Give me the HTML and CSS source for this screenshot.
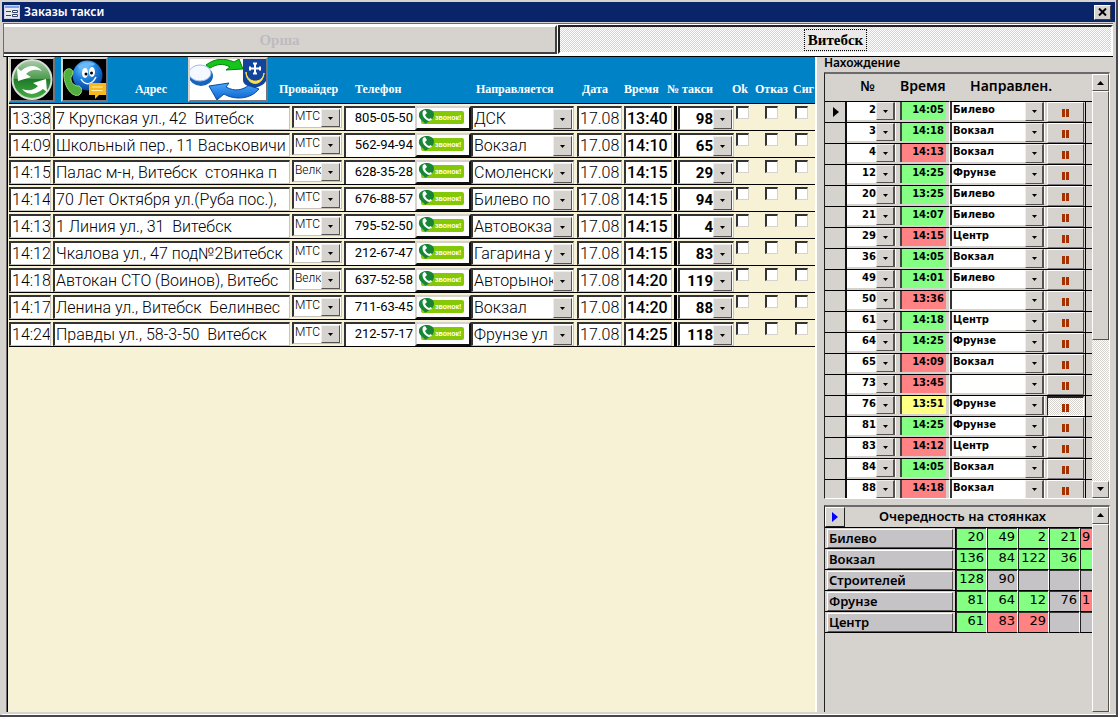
FILE: index.html
```html
<!DOCTYPE html>
<html lang="ru">
<head>
<meta charset="utf-8">
<title>Заказы такси</title>
<link rel="stylesheet" href="styles.css">
</head>
<body>
<div class="window">
  <header class="titlebar">
    <svg class="app-icon" width="16" height="14" viewBox="0 0 16 14" aria-hidden="true">
      <rect width="16" height="14" fill="#c9d2e6"/><rect x="1" y="1" width="14" height="2" fill="#7ba3e8"/>
      <rect x="1" y="3" width="14" height="10" fill="#e9e8ea"/>
      <path d="M2 6.500h5M2 10.500h5" stroke="#35466e"/><path d="M8.500 5.500h5v2h-5zM8.500 9.500h5v2h-5z" fill="#fff" stroke="#35466e"/>
    </svg>
    <h1 class="title">Заказы такси</h1>
    <button class="close" type="button" aria-label="Закрыть"><svg width="9" height="8" viewBox="0 0 9 8"><path d="M1 0.500l7 7M8 0.500l-7 7" stroke="#000" stroke-width="2"/></svg></button>
  </header>
  <nav class="tabs">
    <button class="tab tab-off" type="button"><span class="tab-text">Орша</span></button>
    <button class="tab tab-on" type="button"><span class="tab-text">Витебск</span></button>
  </nav>
  <main class="content">
    <section class="orders">
      <table class="order-table">
        <colgroup>
          <col class="w44"><col><col class="w52"><col class="w71"><col class="w56"><col class="w106"><col class="w47"><col class="w50"><col class="w62"><col class="w29"><col class="w30"><col class="w20">
        </colgroup>
        <thead>
          <tr>
            <th colspan="2" class="tools-cell">
              <div class="tools">
                <button class="tool" type="button" aria-label="Обновить">
                  <svg width="42" height="41" viewBox="0 0 42 41">
                    <defs><linearGradient id="gr" x1="0" y1="0" x2="0" y2="1"><stop offset="0" stop-color="#a9cda6"/><stop offset=".48" stop-color="#4d9a50"/><stop offset=".5" stop-color="#1d7a28"/><stop offset="1" stop-color="#48b044"/></linearGradient></defs>
                    <rect width="42" height="41" fill="#000"/><circle cx="21" cy="20.500" r="19.500" fill="url(#gr)" stroke="#d9ddd9" stroke-width="2"/>
                    <path d="M6 9l1 13 13-4-5-3c5-5 10-5 16-3C25 5 17 6 10 12z" fill="#fff"/>
                    <path d="M36 33l-1-13-13 4 5 3c-5 5-10 5-16 3 6 7 14 6 21 0z" fill="#fff"/>
                  </svg>
                </button>
                <button class="tool" type="button" aria-label="Связь">
                  <svg width="43" height="41" viewBox="0 0 43 41">
                    <defs><radialGradient id="bl" cx=".4" cy=".25" r=".8"><stop offset="0" stop-color="#8ccfff"/><stop offset=".45" stop-color="#1e84e0"/><stop offset="1" stop-color="#053a94"/></radialGradient></defs>
                    <rect width="43" height="41" fill="#000"/><circle cx="24.500" cy="16.500" r="15" fill="url(#bl)"/>
                    <path d="M15 7c5-4 13-5 17-2-3 3-6 1-9 4s-7 2-8-2z" fill="#6cb9f5"/>
                    <ellipse cx="22" cy="14" rx="3" ry="5" fill="#fff"/><ellipse cx="29" cy="13" rx="3" ry="5" fill="#fff"/><circle cx="23" cy="15" r="1.500"/><circle cx="28.500" cy="14" r="1.500"/>
                    <path d="M18 20c4 7 11 6 15-2" fill="none" stroke="#fff" stroke-width="1.500"/>
                    <path d="M1 14c1-5 8-6 9-1 0 4-3 4-2 8 1 4 4 6 8 6 4 2 3 7 0 9C8 39 0 25 1 14z" fill="#4fae3c" stroke="#9adb85"/>
                    <path d="M26 24h17v12h-7l-4 4v-4h-6z" fill="#f7b91d"/><path d="M28.500 28h11M28.500 31.500h11" stroke="#fff1a8"/>
                  </svg>
                </button>
                <span class="address-label">Адрес</span>
                <button class="tool" type="button" aria-label="Сменить город">
                  <svg width="76" height="41" viewBox="0 0 76 41">
                    <defs><linearGradient id="ar" x1="0" y1="0" x2="0" y2="1"><stop offset="0" stop-color="#4aa8ff"/><stop offset="1" stop-color="#0b62c8"/></linearGradient></defs>
                    <rect width="76" height="41" fill="#fff"/>
                    <ellipse cx="11" cy="17" rx="12" ry="10" fill="#1763bd"/><ellipse cx="10" cy="14" rx="11" ry="8" fill="#f4f8ff" stroke="#9bbde8"/>
                    <path d="M16 6C25-1 35-1 44 3l5-3 4 10-17 1 4-3c-7-4-13-3-20 1z" fill="#15c51c" stroke="#08820d"/>
                    <path d="M19 27l20-3-3 4c9 5 17 3 23-2l10 4c-9 11-25 11-35 5l-7 6z" fill="url(#ar)" stroke="#0a4aa0"/>
                    <path d="M53 0h23v22c-2 4-6 5-11 7-7-2-12-3-12-8z" fill="#12449b"/>
                    <path d="M65 4v11M59.500 9.500h11M63 4.500h4M63 14.500h4M60 7.500v4M70 7.500v4" stroke="#fff" stroke-width="2"/>
                    <path d="M56 13c1 12 17 12 18 1-1 15-18 13-18-1z" fill="#ffe14a" stroke="#ffe14a"/>
                  </svg>
                </button>
              </div>
            </th>
            <th class="provider-head">Провайдер</th><th>Телефон</th><th></th><th class="dest-head">Направляется</th><th class="date-head">Дата</th><th>Время</th><th class="taxi-head">№ такси</th><th class="ok-head">Ok</th><th class="refuse-head">Отказ</th><th class="signal-head">Сиг</th>
          </tr>
        </thead>
        <tbody id="orders"></tbody>
      </table>
    </section>
    <aside class="side">
      <h2 class="side-title">Нахождение</h2>
      <section class="subform places">
        <div class="sub-main">
          <table class="place-table">
            <colgroup><col class="w22"><col class="w53"><col class="w50"><col><col class="w38"><col class="w7"></colgroup>
            <thead><tr><th></th><th class="num-head">№</th><th class="time-head">Время</th><th class="where-head">Направлен.</th><th></th><th></th></tr></thead>
            <tbody id="places"></tbody>
          </table>
        </div>
        <div class="scrollbar">
          <button class="arrow" type="button" aria-label="Вверх"><svg width="7" height="4" viewBox="0 0 7 4"><path d="M3.500 0L7 4H0z"/></svg></button>
          <div class="thumb thumb-part"></div>
          <div class="track"></div>
          <button class="arrow" type="button" aria-label="Вниз"><svg width="7" height="4" viewBox="0 0 7 4"><path d="M3.500 4L7 0H0z"/></svg></button>
        </div>
      </section>
      <section class="subform queue">
        <div class="sub-main">
          <div class="queue-head">
            <button class="marker" type="button" aria-label="Текущая запись"><svg width="6" height="10" viewBox="0 0 6 10"><path d="M0 0l6 5-6 5z" fill="#00f"/></svg></button>
            <h2 class="queue-title">Очередность на стоянках</h2>
          </div>
          <table class="queue-table"><tbody id="queue"></tbody></table>
        </div>
        <div class="scrollbar">
          <button class="arrow" type="button" aria-label="Вверх"><svg width="7" height="4" viewBox="0 0 7 4"><path d="M3.500 0L7 4H0z"/></svg></button>
          <div class="thumb thumb-full"></div>
        </div>
      </section>
    </aside>
  </main>
</div>
<script src="app.js"></script>
</body>
</html>
```
FILE: styles.css
```css
* { box-sizing: border-box; }
body { margin: 0; font-family: "Liberation Sans", sans-serif; color: #000; }
button, input, select { font: inherit; color: inherit; margin: 0; padding: 0; border: 0; border-radius: 0; outline: 0; }
button { background: #d6d3ce; cursor: pointer; }
svg { display: block; }
h1, h2 { margin: 0; }

.window { height: 100vh; display: flex; flex-direction: column; background: #d6d3ce; padding: 2px 0 0 2px; border-right: 2px solid #47474b; border-bottom: 2px solid #47474b; overflow: hidden; }
.titlebar { flex: none; height: 20px; display: flex; align-items: center; gap: 4px; margin-right: 1px; padding: 0 4px 0 2px; background: #0a246a; color: #fff; }
.title { flex: 1; font: 600 12px/18px "Noto Sans", sans-serif; }
.close { width: 17px; height: 15px; display: grid; place-items: center; border: 1px solid; border-color: #fff #404040 #404040 #fff; }

.tabs { flex: none; display: flex; gap: 1px; height: 34px; margin: 1px 3px 0 1px; padding-top: 1px; border-top: 1px solid #6c6a6c; border-left: 1px solid #6c6a6c; border-bottom: 1px solid #000; background: #fff; }
.tab { flex: 1; height: 29px; font: bold 15px/18px "Liberation Serif", serif; }
.tab-off { color: #bdbbc0; border: 2px solid #fff; border-left-width: 0; border-right-color: #404040; border-bottom-color: #404040; }
.tab-on { background: repeating-conic-gradient(#fff 0 25%, #d6d3ce 0 50%) 0 0 / 2px 2px; border: 2px solid #222; border-right-color: #fff; border-bottom-color: #fff; }
.tab-text { display: inline-block; padding: 1px 3px; }
.tab-on .tab-text { border: 1px dotted #000; background: #eceae8; }

.content { flex: 1; min-height: 0; display: flex; padding: 0 5px 2px 1px; border-bottom: 1px solid #fff; }
.orders { flex: 1; min-width: 0; margin-left: 3px; border-left: 1px solid #6c6a6c; box-shadow: inset 1px 0 #000; padding-left: 2px; background: #f7f2d6; overflow: hidden; }
table { border-collapse: separate; border-spacing: 0; table-layout: fixed; width: 100%; }
th, td { padding: 0; }
.w7 { width: 7px; } .w20 { width: 20px; } .w22 { width: 22px; } .w29 { width: 29px; } .w30 { width: 30px; } .w38 { width: 38px; }
.w44 { width: 44px; } .w47 { width: 47px; } .w50 { width: 50px; } .w52 { width: 52px; } .w53 { width: 53px; } .w56 { width: 56px; }
.w62 { width: 62px; } .w71 { width: 71px; } .w106 { width: 106px; }

.order-table th { height: 47px; padding-bottom: 6px; vertical-align: bottom; background: #0082c6; color: #fff; border-bottom: 1px solid #000; font: bold 12px/16px "Liberation Serif", serif; white-space: nowrap; text-align: left; }
.order-table .tools-cell { padding: 0; vertical-align: top; }
.provider-head { text-indent: -13px; }
.order-table th:nth-child(3) { padding-left: 11px; }
.dest-head { padding-left: 5px; }
.date-head { padding-left: 5px; }
.taxi-head { text-indent: -7px; }
.ok-head { text-indent: -4px; }
.refuse-head { text-indent: -10px; }
.signal-head { text-indent: -2px; }
.tools { display: flex; height: 46px; padding-right: 24px; }
.tool { border: 2px solid #d6d3ce; border-right-color: #77757a; border-bottom-color: #77757a; height: 45px; }
.tool + .tool { margin-left: 6px; }
.address-label { flex: 1; padding-top: 24px; text-align: center; text-indent: 6px; }

.order-table tbody td { height: 27px; padding-top: 2px; vertical-align: top; border-bottom: 1px solid #000; font: 300 16px/20px Roboto, sans-serif; }
.box { display: block; width: 100%; height: 24px; background: #fff; border: 1px solid; border-width: 2px 1px 1px 2px; border-color: #333 #c8c5be #c8c5be #333; }
input.box { padding-left: 1px; }
.gap2 { padding-right: 2px; }
.gap3 { padding-right: 3px; }
.time-on { font-weight: 500; }
.phone { border-right: 0; border-bottom: 0; text-align: right; font-size: 13px; font-weight: 400; padding: 0 2px 4px 0; }
.call { display: block; width: 100%; height: 24px; border: 2px solid #d6d3ce; border-right-color: #111; border-bottom-color: #111; background: #fff; }
.combo { position: relative; display: block; }
.combo select { appearance: none; width: 100%; height: 100%; display: block; background: #fff; padding: 0 18px 0 1px; overflow: hidden; white-space: nowrap; text-overflow: clip; }
.combo::after { content: ""; position: absolute; right: 1px; top: 1px; bottom: 0; width: 17px; pointer-events: none; border: 1px solid; border-color: #efeeea #55524f #55524f #efeeea; background: #d6d3ce url("data:image/svg+xml,%3Csvg xmlns='http://www.w3.org/2000/svg' width='5' height='3'%3E%3Cpath d='M0 0h5L2.500 3z'/%3E%3C/svg%3E") center no-repeat; }
.provider { height: 22px; font-size: 12px; line-height: 14px; }
.provider select { padding-bottom: 4px; }
.taxi-cell { display: flex; }
.taxi-cell::before { content: ""; width: 3px; margin-right: 1px; background: #000; }
.taxi { flex: 1; font: bold 15px/20px Roboto, sans-serif; }
.taxi select, .num select { text-align: right; text-align-last: right; }
.taxi select { padding-right: 20px; }
.check { appearance: none; display: block; width: 13px; height: 13px; background: #fff; border: 1px solid; border-width: 2px 1px 1px 2px; border-color: #333 #d6d3ce #d6d3ce #333; }

.side { flex: none; width: 296px; display: flex; flex-direction: column; padding-left: 7px; border-left: 2px solid #fff; }
.side-title { height: 15px; font: 600 12px/12px "Noto Sans", sans-serif; }
.subform { display: flex; min-height: 0; border: 1px solid; border-width: 2px 1px 1px; border-color: #6c6a6c #fff #fff #222; overflow: hidden; margin-right: 1px; }
.places { flex: 427; margin-bottom: 6px; }
.queue { flex: 207; border-bottom: 0; }
.sub-main { flex: 1; min-width: 0; overflow: hidden; }
.place-table th { height: 27px; padding: 0 0 4px; text-align: center; font: 600 14px/20px "Noto Sans", sans-serif; white-space: nowrap; }
.place-table .num-head { padding-right: 12px; }
.place-table .time-head { padding-right: 10px; }
.place-table .where-head { text-align: left; text-indent: 20px; }
.place-table td { height: 21px; border-top: 1px solid #000; vertical-align: top; font: bold 10px/14px "DejaVu Sans", sans-serif; }
.place-table td.selector { vertical-align: middle; padding-left: 8px; border-right: 2px solid #111; }
.place-table .combo { height: 18px; margin-right: 3px; }
.place-table .combo select { padding-bottom: 3px; }
.place-table .num select { padding-right: 20px; }
.place-table .num::after, .place-table .where::after { top: 0; width: 16px; border-right: 2px solid #55524f; }
.place-table .where { border-left: 2px solid #333; margin-right: 2px; }
.place-table .where::after { bottom: -1px; }
.place-table .num { margin-right: 4px; }
.time { display: block; width: 46px; height: 18px; border-left: 2px solid #444; padding: 0 2px 3px 0; text-align: right; }
.green { background: #84ff84; } .red { background: #ff8284; } .yellow { background: #ffff84; }
.place-table td.time-cell { border-right: 1px solid #fff; }
.pause { display: grid; place-items: end center; width: 37px; height: 20px; padding-bottom: 4px; border: 1px solid; border-color: #fff #44413f #77757a #fff; }
.pressed { background: repeating-conic-gradient(#fff 0 25%, #d6d3ce 0 50%) 0 0 / 2px 2px; border-color: #222 #fff #fff #222; border-top-width: 2px; padding-bottom: 3px; }
.place-table td.tail { border-left: 1px solid #000; }

.scrollbar { flex: none; width: 17px; display: flex; flex-direction: column; background: repeating-conic-gradient(#fff 0 25%, #d6d3ce 0 50%) 0 0 / 2px 2px; }
.arrow { flex: none; height: 17px; display: grid; place-items: center; border: 1px solid; border-color: #fff #55524f #55524f #fff; }
.thumb { background: #d6d3ce; border: 1px solid; border-color: #fff #55524f #55524f #fff; }
.thumb-part { flex: 248; } .track { flex: 141; } .thumb-full { flex: 1; }

.queue-head { display: flex; height: 20px; }
.marker { width: 20px; display: grid; place-items: center; border: 1px solid; border-color: #fff #222 #222 #fff; }
.queue-title { flex: 1; padding-right: 12px; text-align: center; font: 600 13px/18px "Noto Sans", sans-serif; }
.queue-table { width: 286px; border-top: 1px solid #000; }
.queue-table td, .queue-table th { height: 21px; border-bottom: 1px solid #000; }
.queue-table th { width: 131px; padding: 1px 2px 0; border-right: 1px solid #000; }
.stand { display: block; width: 100%; height: 19px; padding-left: 1px; text-align: left; background: #c6c3c6; border: 1px solid; border-color: #fff #55524f #55524f #fff; font: 600 13px/16px "Noto Sans", sans-serif; }
.queue-table td { width: 31px; padding: 0 2px 2px 0; text-align: right; font: 13px/16px "DejaVu Sans", sans-serif; border-left: 1px solid #222; border-right: 1px solid #fff; box-shadow: inset 0 1px #333; overflow: hidden; }
.queue-table td:last-child { padding-left: 1px; text-align: left; }
.queue-table td.plain { background: #c6c3c6; }
```
FILE: app.js
```js
const orders = [
  ["13:38", "7 Крупская ул., 42  Витебск", "МТС", "805-05-50", "ДСК", "13:40", "98"],
  ["14:09", "Школьный пер., 11 Васьковичи", "МТС", "562-94-94", "Вокзал", "14:10", "65"],
  ["14:15", "Палас м-н, Витебск  стоянка п", "Велк", "628-35-28", "Смоленски", "14:15", "29"],
  ["14:14", "70 Лет Октября ул.(Руба пос.),", "МТС", "676-88-57", "Билево по", "14:15", "94"],
  ["14:13", "1 Линия ул., 31  Витебск", "МТС", "795-52-50", "Автовокза", "14:15", "4"],
  ["14:12", "Чкалова ул., 47 под№2Витебск", "МТС", "212-67-47", "Гагарина у", "14:15", "83"],
  ["14:18", "Автокан СТО (Воинов), Витебс", "Велк", "637-52-58", "Авторынок", "14:20", "119"],
  ["14:17", "Ленина ул., Витебск  Белинвес", "МТС", "711-63-45", "Вокзал", "14:20", "88"],
  ["14:24", "Правды ул., 58-3-50  Витебск", "МТС", "212-57-17", "Фрунзе ул", "14:25", "118"]
];
const callIcon = `<svg width="52" height="20" viewBox="0 0 52 20">
  <rect x="4" y="3" width="43" height="13" rx="2" fill="#85c808"/>
  <path d="M2 6C3 0 16-1 17 6c0 6-5 7-9 10 0-3-7-4-6-10z" fill="#168536"/>
  <path d="M6 3l2-1 2 3-2 2c1 2 2 3 4 4l2-1 1 2-3 1C8 12 4 7 6 3z" fill="#fff"/>
  <text x="18" y="12" font-family="Liberation Sans" font-size="7" font-weight="bold" fill="#fff">звонок!</text></svg>`;
const combo = (cls, value, label) =>
  `<span class="combo ${cls}"><select aria-label="${label}"><option>${value}</option></select></span>`;
const field = (cls, value, label) => `<input class="box ${cls}" type="text" value="${value}" aria-label="${label}">`;
const check = label => `<td><input class="check" type="checkbox" aria-label="${label}"></td>`;

document.getElementById("orders").innerHTML = orders.map(([t, addr, prov, phone, dest, at, taxi]) => `<tr>
  <td class="gap2">${field("", t, "Принят")}</td>
  <td class="gap2">${field("", addr, "Адрес")}</td>
  <td class="gap2">${combo("box provider", prov, "Провайдер")}</td>
  <td>${field("phone", phone, "Телефон")}</td>
  <td><button class="call" type="button" aria-label="Звонок">${callIcon}</button></td>
  <td class="gap3">${combo("box", dest, "Направляется")}</td>
  <td class="gap2">${field("", "17.08", "Дата")}</td>
  <td class="gap2">${field("time-on", at, "Время")}</td>
  <td class="gap2"><div class="taxi-cell">${combo("box taxi", taxi, "№ такси")}</div></td>
  ${check("Ok")}${check("Отказ")}${check("Сиг")}</tr>`).join("");

const places = [
  [2, "14:05", "Билево", "green"], [3, "14:18", "Вокзал", "green"], [4, "14:13", "Вокзал", "red"],
  [12, "14:25", "Фрунзе", "green"], [20, "13:25", "Билево", "green"], [21, "14:07", "Билево", "green"],
  [29, "14:15", "Центр", "red"], [36, "14:05", "Вокзал", "green"], [49, "14:01", "Билево", "green"],
  [50, "13:36", "", "red"], [61, "14:18", "Центр", "green"], [64, "14:25", "Фрунзе", "green"],
  [65, "14:09", "Вокзал", "red"], [73, "13:45", "", "red"], [76, "13:51", "Фрунзе", "yellow"],
  [81, "14:25", "Фрунзе", "green"], [83, "14:12", "Центр", "red"], [84, "14:05", "Вокзал", "green"],
  [88, "14:18", "Вокзал", "red"]
];
const current = `<svg width="6" height="10" viewBox="0 0 6 10"><path d="M0 0l6 5-6 5z"/></svg>`;
const pause = `<svg width="7" height="8" viewBox="0 0 7 8"><path d="M0 0h3v8H0zM4 0h3v8H4z" fill="#a53000"/></svg>`;
document.getElementById("places").innerHTML = places.map(([n, t, where, color], i) => `<tr>
  <td class="selector">${i === 0 ? current : ""}</td>
  <td>${combo("num", n, "№")}</td>
  <td class="time-cell"><input class="time ${color}" type="text" value="${t}" aria-label="Время"></td>
  <td>${combo("where", where, "Направление")}</td>
  <td><button class="pause${color === "yellow" ? " pressed" : ""}" type="button" aria-label="Пауза">${pause}</button></td>
  <td class="tail"></td></tr>`).join("");

const stands = [
  ["Билево", "20g 49g 2g 21g 9r"], ["Вокзал", "136g 84g 122g 36g g"], ["Строителей", "128g 90p p p p"],
  ["Фрунзе", "81g 64g 12g 76p 1r"], ["Центр", "61g 83r 29r p p"]
];
const colors = { g: "green", r: "red", p: "plain" };
document.getElementById("queue").innerHTML = stands.map(([name, cells]) => `<tr>
  <th scope="row"><button class="stand" type="button">${name}</button></th>
  ${cells.split(" ").map(c => `<td class="${colors[c.slice(-1)]}">${c.slice(0, -1)}</td>`).join("")}</tr>`).join("");
```
